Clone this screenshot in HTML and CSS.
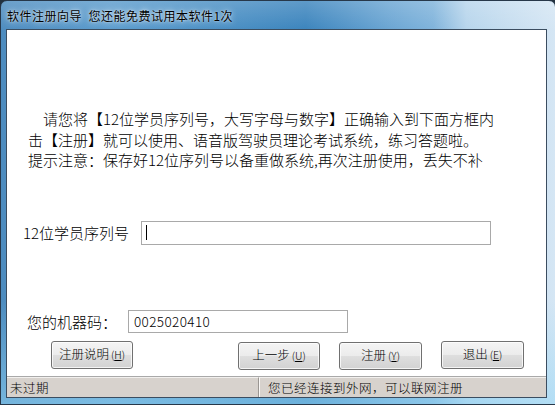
FILE: index.html
```html
<!DOCTYPE html>
<html lang="zh-CN">
<head>
<meta charset="utf-8">
<title>软件注册向导</title>
<link rel="stylesheet" href="styles.css">
</head>
<body>
<div class="window">
  <div class="titlebar">软件注册向导&nbsp; 您还能免费试用本软件1次</div>
  <div class="client">
    <p class="intro">
      <span class="line first">请您将【12位学员序列号，大写字母与数字】正确输入到下面方框内</span>
      <span class="line">击【注册】就可以使用、语音版驾驶员理论考试系统，练习答题啦。</span>
      <span class="line">提示注意：保存好12位序列号以备重做系统,再次注册使用，丢失不补</span>
    </p>
    <div class="row serial-row">
      <label class="label serial-label">12位学员序列号</label>
      <div class="field serial-field"><span class="caret"></span></div>
    </div>
    <div class="row machine-row">
      <label class="label machine-label">您的机器码：</label>
      <div class="field machine-field">0025020410</div>
    </div>
    <div class="buttons">
      <button class="btn btn-help">注册说明<span class="mn">(<u>H</u>)</span></button>
      <button class="btn btn-back">上一步<span class="mn">(<u>U</u>)</span></button>
      <button class="btn btn-reg">注册<span class="mn">(<u>Y</u>)</span></button>
      <button class="btn btn-exit">退出<span class="mn">(<u>E</u>)</span></button>
    </div>
    <div class="statusbar">
      <div class="panel panel-left">未过期</div>
      <div class="panel panel-right">您已经连接到外网，可以联网注册</div>
    </div>
  </div>
</div>
</body>
</html>
```

FILE: styles.css
```css
* { box-sizing: border-box; }

html, body {
  margin: 0;
  padding: 0;
  width: 555px;
  height: 405px;
  overflow: hidden;
  background: #22313f;
}

.window {
  width: 556px;
  height: 405px;
  border: 1px solid #27384a;
  border-radius: 7px 7px 0 0;
  background:
    linear-gradient(to bottom, rgba(255,255,255,0.18) 0, rgba(255,255,255,0) 30px, rgba(255,255,255,0) 300px, rgba(150,215,245,0.55) 100%),
    linear-gradient(to right, #4d8cbf 0%, #5c9ccd 20%, #4a8fc4 40%, #3b84bd 55%, #6aa5d3 70%, #7fb3db 78%, #b7d5ec 84%, #c7def0 92%, #d5e6f4 100%);
  display: flex;
  flex-direction: column;
}

.titlebar {
  height: 28px;
  padding: 7px 0 0 6px;
  font-family: "Noto Sans CJK SC", "Noto Sans", sans-serif;
  font-size: 12px;
  letter-spacing: 0.5px;
  line-height: 16px;
  color: #000;
  text-shadow: 0 0 6px rgba(255,255,255,0.9), 0 0 2px rgba(255,255,255,0.7);
  white-space: nowrap;
}

.client {
  margin-left: 5px;
  width: 541px;
  height: 369px;
  background: #fff;
  border: 1px solid #3b4d60;
  display: flex;
  flex-direction: column;
  font-family: "Noto Sans CJK SC", "Noto Sans CJK JP", sans-serif;
  font-weight: 300;
  color: #000;
}

.intro {
  margin: 79px 0 0 0;
  padding-left: 21px;
  font-size: 15px;
  line-height: 20.5px;
}

.line {
  display: block;
  white-space: nowrap;
}

.line.first {
  padding-left: 15px;
}

.row {
  display: flex;
  align-items: center;
}

.label {
  font-size: 15px;
  white-space: nowrap;
}

.field {
  border: 1px solid #a9a9a9;
  background: #fff;
  font-size: 14px;
  display: flex;
  align-items: center;
}

.serial-row {
  margin-top: 50px;
  padding-left: 16px;
}

.serial-label { width: 118px; }

.serial-field {
  width: 350px;
  height: 24px;
  padding-left: 4px;
}

.caret {
  width: 1px;
  height: 15px;
  background: #000;
}

.machine-row {
  margin-top: 65px;
  padding-left: 20px;
}

.machine-label { width: 101px; }

.machine-field {
  width: 220px;
  height: 23px;
  padding-left: 5px;
  font-size: 13.5px;
  letter-spacing: 0.4px;
}

.buttons {
  margin-top: 8px;
  display: flex;
  align-items: flex-start;
}

.btn {
  height: 28px;
  width: 82px;
  padding: 0;
  border: 1px solid #707070;
  border-radius: 3px;
  background: linear-gradient(to bottom, #f4f4f4 0%, #ececec 48%, #dedede 52%, #d2d2d2 100%);
  box-shadow: inset 0 0 0 1px rgba(255,255,255,0.75);
  font-family: "Noto Sans CJK SC", sans-serif;
  font-weight: 300;
  font-size: 12.5px;
  color: #000;
  line-height: 14px;
}

.mn {
  font-size: 10.5px;
  margin-left: 2px;
}

.mn u { text-decoration-thickness: 1px; }

.btn-help { margin-left: 44px; }
.btn-back { margin-left: 105px; margin-top: 1px; }
.btn-reg  { margin-left: 19px; margin-top: 1px; width: 83px; }
.btn-exit { margin-left: 19px; width: 83px; }

.statusbar {
  margin-top: auto;
  height: 21px;
  border-top: 1px solid #a9a9a9;
  background: #d7d2cd;
  display: flex;
  font-family: "Noto Sans CJK SC", sans-serif;
  font-size: 12.5px;
  letter-spacing: 0.5px;
}

.panel {
  height: 20px;
  line-height: 19px;
  padding-left: 3px;
  border-top: 1px solid #f2f0ee;
  white-space: nowrap;
}

.panel-left {
  width: 252px;
  border-right: 1px solid #9a9692;
}

.panel-right {
  flex: 1;
  padding-left: 8px;
  border-left: 1px solid #faf8f6;
}
```
